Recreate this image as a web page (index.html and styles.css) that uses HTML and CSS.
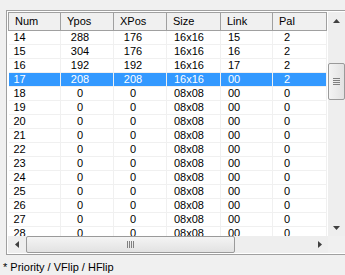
FILE: index.html
```html
<!DOCTYPE html>
<html lang="en">
<head>
    <meta charset="UTF-8">
    <title>Sprites</title>
    <link rel="stylesheet" href="styles.css">
</head>
<body>

<div class="list">
    <div class="view">
        <div class="rows">
            <table>
                <colgroup>
                    <col class="c-num">
                    <col class="c-y">
                    <col class="c-x">
                    <col class="c-size">
                    <col class="c-link">
                    <col class="c-pal">
                </colgroup>
                <thead>
                <tr><th>Num</th><th>Ypos</th><th>XPos</th><th>Size</th><th>Link</th><th>Pal</th></tr>
                </thead>
                <tbody>
                <tr><td>14</td><td class="mid">288</td><td class="mid">176</td><td>16x16</td><td>15</td><td class="pal">2</td></tr>
                <tr><td>15</td><td class="mid">304</td><td class="mid">176</td><td>16x16</td><td>16</td><td class="pal">2</td></tr>
                <tr><td>16</td><td class="mid">192</td><td class="mid">192</td><td>16x16</td><td>17</td><td class="pal">2</td></tr>
                <tr class="sel"><td>17</td><td class="mid">208</td><td class="mid">208</td><td>16x16</td><td>00</td><td class="pal">2</td></tr>
                <tr><td>18</td><td class="mid">0</td><td class="mid">0</td><td>08x08</td><td>00</td><td class="pal">0</td></tr>
                <tr><td>19</td><td class="mid">0</td><td class="mid">0</td><td>08x08</td><td>00</td><td class="pal">0</td></tr>
                <tr><td>20</td><td class="mid">0</td><td class="mid">0</td><td>08x08</td><td>00</td><td class="pal">0</td></tr>
                <tr><td>21</td><td class="mid">0</td><td class="mid">0</td><td>08x08</td><td>00</td><td class="pal">0</td></tr>
                <tr><td>22</td><td class="mid">0</td><td class="mid">0</td><td>08x08</td><td>00</td><td class="pal">0</td></tr>
                <tr><td>23</td><td class="mid">0</td><td class="mid">0</td><td>08x08</td><td>00</td><td class="pal">0</td></tr>
                <tr><td>24</td><td class="mid">0</td><td class="mid">0</td><td>08x08</td><td>00</td><td class="pal">0</td></tr>
                <tr><td>25</td><td class="mid">0</td><td class="mid">0</td><td>08x08</td><td>00</td><td class="pal">0</td></tr>
                <tr><td>26</td><td class="mid">0</td><td class="mid">0</td><td>08x08</td><td>00</td><td class="pal">0</td></tr>
                <tr><td>27</td><td class="mid">0</td><td class="mid">0</td><td>08x08</td><td>00</td><td class="pal">0</td></tr>
                <tr><td>28</td><td class="mid">0</td><td class="mid">0</td><td>08x08</td><td>00</td><td class="pal">0</td></tr>
                </tbody>
            </table>
        </div>
        <div class="vscroll">
            <div class="btn"><svg width="7" height="4" viewBox="0 0 7 4"><path d="M3.5 0L7 4H0z" fill="#404040"/></svg></div>
            <div class="track">
                <div class="thumb vthumb"><span class="grip-h"></span></div>
            </div>
            <div class="btn"><svg width="7" height="4" viewBox="0 0 7 4"><path d="M0 0H7L3.5 4z" fill="#404040"/></svg></div>
        </div>
    </div>
    <div class="bottom">
        <div class="hscroll">
            <div class="btn"><svg width="4" height="7" viewBox="0 0 4 7"><path d="M4 0V7L0 3.5z" fill="#404040"/></svg></div>
            <div class="track htrack">
                <div class="thumb hthumb"><span class="grip-v"></span></div>
            </div>
            <div class="btn"><svg width="4" height="7" viewBox="0 0 4 7"><path d="M0 0L4 3.5L0 7z" fill="#404040"/></svg></div>
        </div>
        <div class="corner"></div>
    </div>
</div>

<div class="note">* Priority / VFlip / HFlip</div>

</body>
</html>
```

FILE: styles.css
```css
body {
    margin: 0;
    background-color: #f0f0f0;
    font-family: "Liberation Sans", Arial, sans-serif;
    font-size: 11px;
    color: #000;
}
.list {
    margin: 10px 0 0 6px;
    width: 337px;
    height: 241px;
    border: 1px solid #a0a0a0;
    padding: 1px;
    background-color: #fff;
    display: flex;
    flex-direction: column;
}
.view {
    display: flex;
    height: 224px;
}
.rows {
    flex: 1;
    overflow: hidden;
}
table {
    table-layout: fixed;
    width: 318px;
    border-collapse: collapse;
}
.c-num { width: 52px; }
.c-y { width: 53px; }
.c-x { width: 53px; }
.c-size { width: 54px; }
.c-link { width: 52px; }
.c-pal { width: 54px; }
th {
    height: 17px;
    padding: 0 0 0 6px;
    text-align: left;
    font-weight: normal;
    background-color: #f0f0f0;
    border: 1px solid #a0a0a0;
    border-left: none;
    line-height: 17px;
}
th:first-child {
    border-left: 1px solid #a0a0a0;
}
td {
    height: 13px;
    padding: 0 0 0 5px;
    line-height: 13px;
    border-right: 1px solid #f0f0f0;
    border-bottom: 1px solid #f0f0f0;
    white-space: nowrap;
}
td:nth-child(4), td:nth-child(5) {
    padding-left: 7px;
}
td.mid {
    padding: 0 14px 0 0;
    text-align: center;
}
td.pal {
    padding-left: 11px;
}
tr.sel td {
    background-color: #3399ff;
    color: #fff;
}
.vscroll {
    width: 17px;
    display: flex;
    flex-direction: column;
    background-color: #eeeeee;
}
.btn {
    width: 17px;
    height: 17px;
    display: flex;
    align-items: center;
    justify-content: center;
    flex-shrink: 0;
}
.track {
    flex: 1;
    position: relative;
}
.thumb {
    position: absolute;
    border: 1px solid #9a9a9a;
    border-radius: 2px;
    box-sizing: border-box;
    display: flex;
    align-items: center;
    justify-content: center;
}
.vthumb {
    left: 0;
    width: 17px;
    top: 34px;
    height: 37px;
    background: linear-gradient(to right, #f4f4f4, #e2e2e2);
}
.hthumb {
    top: 0;
    height: 17px;
    left: 1px;
    width: 209px;
    background: linear-gradient(#f4f4f4, #e2e2e2);
}
.grip-h {
    width: 7px;
    height: 7px;
    background: repeating-linear-gradient(#808080 0 1px, transparent 1px 2px);
}
.grip-v {
    width: 7px;
    height: 7px;
    background: repeating-linear-gradient(to right, #808080 0 1px, transparent 1px 2px);
}
.bottom {
    display: flex;
    height: 17px;
}
.hscroll {
    flex: 1;
    display: flex;
    background-color: #eeeeee;
}
.corner {
    width: 17px;
    background-color: #f0f0f0;
}
.note {
    margin: 6px 0 0 3px;
}
```
